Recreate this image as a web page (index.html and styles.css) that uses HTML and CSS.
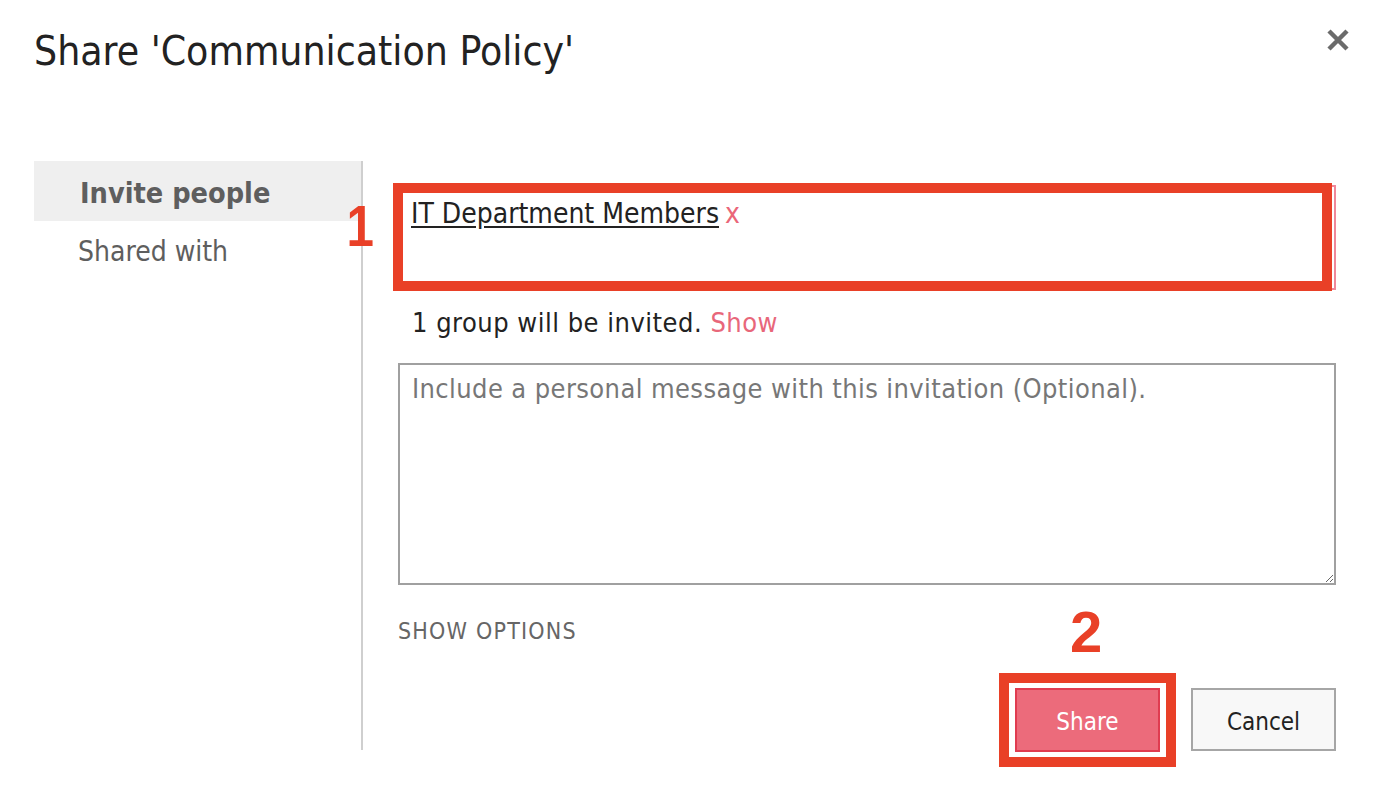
FILE: index.html
```html
<!DOCTYPE html>
<html lang="en">
<head>
<meta charset="utf-8">
<title>Share 'Communication Policy'</title>
<link rel="stylesheet" href="styles.css">
</head>
<body>
<div class="dialog">
  <header class="dlg-head">
    <h1 class="dlg-title">Share 'Communication Policy'</h1>
    <button class="close" aria-label="Close">
      <svg width="24" height="24" viewBox="0 0 24 24"><path d="M3 3 L21 21 M21 3 L3 21" stroke="#6b6b6b" stroke-width="4.5" stroke-linecap="butt" fill="none"/></svg>
    </button>
  </header>
  <div class="dlg-body">
    <nav class="side">
      <div class="tab tab-active">Invite people</div>
      <div class="tab">Shared with</div>
    </nav>
    <section class="main">
      <div class="picker-wrap">
        <span class="anno-num anno-1">1</span>
        <div class="picker">
          <span class="entity">IT Department Members</span><span class="remove">x</span>
        </div>
        <div class="anno-box anno-box-picker"></div>
      </div>
      <p class="invited">1 group will be invited. <a class="show-link">Show</a></p>
      <textarea class="message" placeholder="Include a personal message with this invitation (Optional)."></textarea>
      <div class="options">SHOW OPTIONS</div>
      <div class="actions">
        <div class="share-wrap">
          <span class="anno-num anno-2">2</span>
          <div class="anno-box anno-box-share"></div>
          <button class="btn btn-share">Share</button>
        </div>
        <button class="btn btn-cancel">Cancel</button>
      </div>
    </section>
  </div>
</div>
</body>
</html>
```

FILE: styles.css
```css
* { box-sizing: border-box; }
html, body { margin: 0; padding: 0; background: #fff; }
body {
  font-family: "DejaVu Sans Condensed", "DejaVu Sans", sans-serif;
  color: #222;
  width: 1374px;
  height: 806px;
  overflow: hidden;
}
.dialog {
  padding: 0 38px 0 34px;
}
.dlg-head {
  display: flex;
  justify-content: space-between;
  align-items: flex-start;
  height: 161px;
}
.dlg-title {
  margin: 0;
  padding-top: 24px;
  font-weight: normal;
  font-size: 40.5px;
  line-height: 54px;
  color: #222;
}
.close {
  margin: 28px 0 0 0;
  padding: 0;
  border: 0;
  background: none;
  width: 24px;
  height: 24px;
  display: block;
  margin-right: -14px;
}
.close svg { display: block; }
.dlg-body {
  display: flex;
}
.side {
  width: 329px;
  height: 589px;
  border-right: 2px solid #cfcfcf;
  flex: none;
}
.tab {
  height: 60px;
  font-size: 28px;
  line-height: 60px;
  color: #5e5e5e;
  padding-left: 44px;
}
.tab-active {
  background: #efefef;
  font-weight: bold;
  font-size: 28.6px;
  line-height: 64px;
  padding-left: 46px;
}
.tab + .tab {
  line-height: 62px;
}
.main {
  flex: 1;
  padding: 24px 0 0 35px;
}
.picker-wrap {
  position: relative;
}
.picker {
  height: 105px;
  border: 2px solid #f0889a;
  padding: 10px 11px;
  font-size: 28px;
  line-height: 34px;
}
.entity {
  text-decoration: underline;
  text-underline-offset: 3px;
  color: #222;
}
.remove {
  color: #ea6679;
  margin-left: 6px;
}
.anno-box {
  position: absolute;
  border: 10px solid #e94027;
  pointer-events: none;
}
.anno-box-picker {
  left: -5px;
  top: -2px;
  width: 939px;
  height: 108px;
}
.anno-num {
  position: absolute;
  color: #e94027;
  font-family: "Liberation Sans", Arial, sans-serif;
  font-weight: bold;
  font-size: 58px;
  line-height: 58px;
}
.anno-1 {
  left: -54px;
  top: 12px;
  transform: scaleX(0.85);
}
.invited {
  margin: 0;
  padding: 0 0 0 14px;
  height: 73px;
  font-size: 27px;
  letter-spacing: 0.5px;
  line-height: 66px;
  color: #222;
}
.show-link {
  color: #e8677a;
}
.message {
  display: block;
  width: 100%;
  height: 222px;
  border: 2px solid #a0a0a0;
  padding: 8px 12px;
  font-family: inherit;
  font-size: 27px;
  letter-spacing: 0.4px;
  line-height: 32px;
  color: #222;
  resize: vertical;
  margin: 0;
}
.message::placeholder {
  color: #777;
}
.options {
  margin-top: 31px;
  font-size: 23px;
  letter-spacing: 1.2px;
  line-height: 30px;
  color: #666;
}
.actions {
  display: flex;
  justify-content: flex-end;
  align-items: flex-start;
  gap: 31px;
  margin-top: 42px;
}
.share-wrap {
  position: relative;
}
.anno-box-share {
  left: -16px;
  top: -15px;
  width: 177px;
  height: 94px;
}
.anno-2 {
  left: 55px;
  top: -85px;
}
.btn {
  display: block;
  width: 145px;
  height: 64px;
  font-family: inherit;
  font-size: 24px;
  line-height: 64px;
  margin: 0;
  padding: 0 0 0 0;
  cursor: pointer;
}
.btn-share {
  background: #ec6b7b;
  border: 2px solid #e03c50;
  color: #fff;
}
.btn-cancel {
  background: #f8f8f8;
  border: 2px solid #a6a6a6;
  color: #222;
  height: 63px;
}
```
